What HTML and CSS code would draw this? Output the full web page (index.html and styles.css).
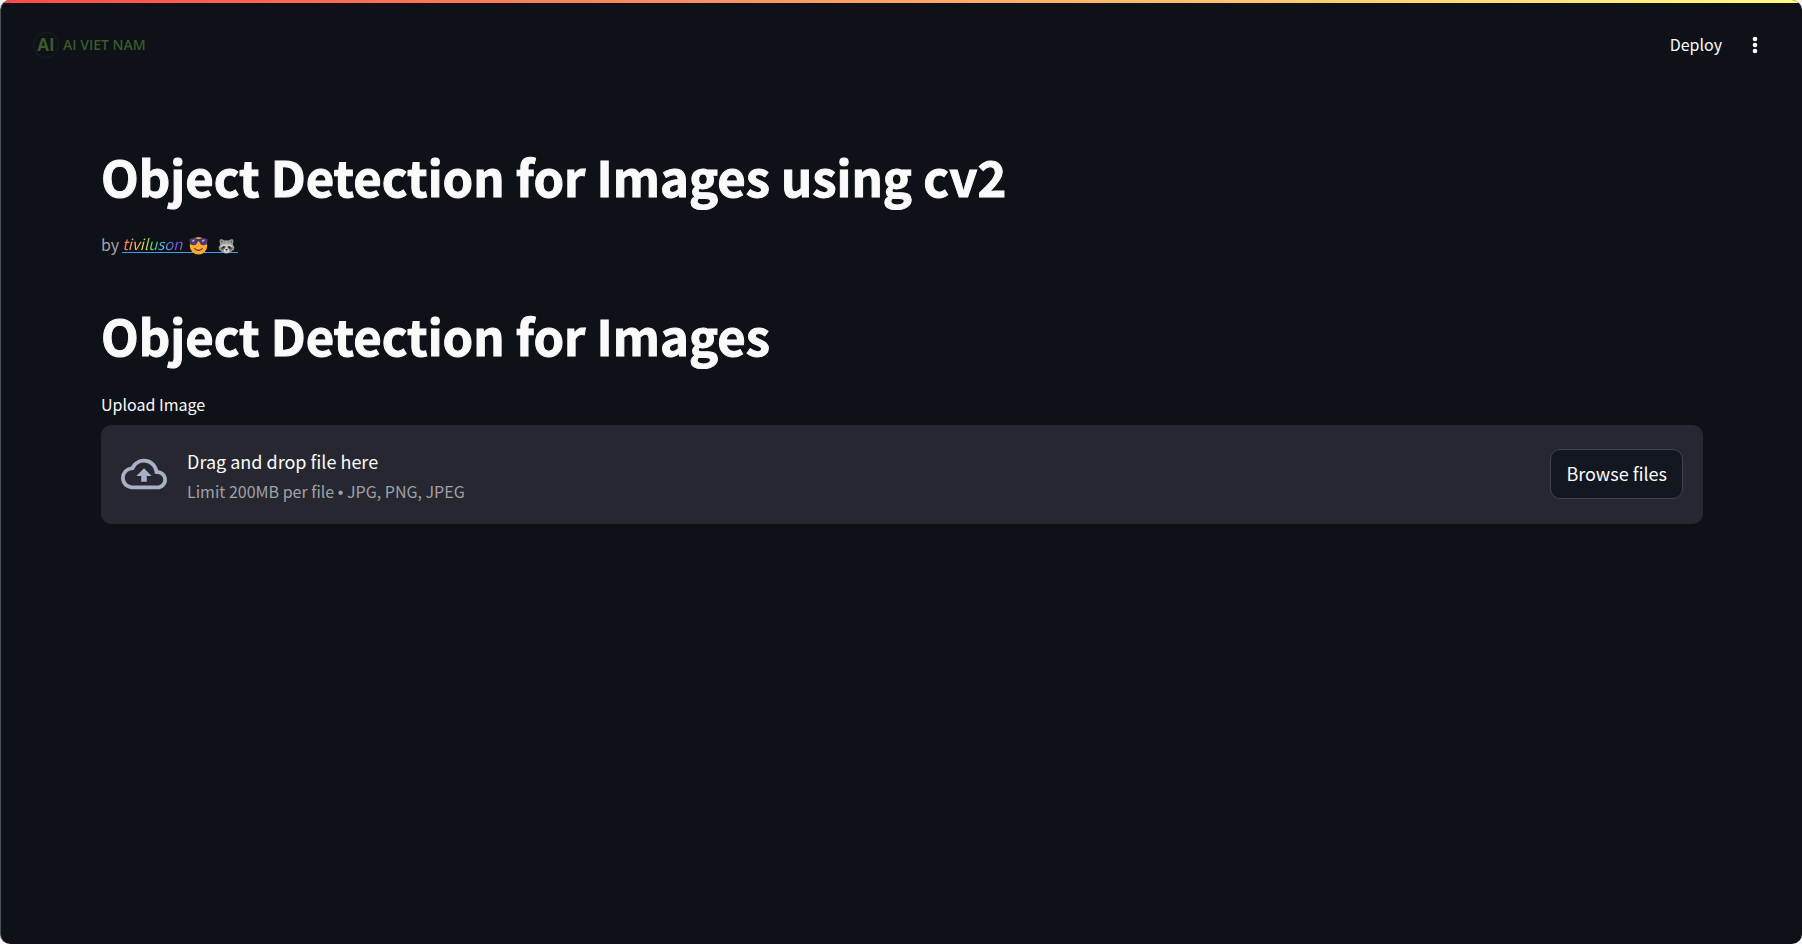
FILE: index.html
```html
<!DOCTYPE html>
<html lang="en">
<head>
<meta charset="utf-8">
<meta name="viewport" content="width=device-width, initial-scale=1">
<title>Object Detection for Images using cv2</title>
<link rel="stylesheet" href="styles.css">
</head>
<body>
<div class="app">
  <div class="decoration"></div>
  <header class="header">
    <div class="logo"><span class="logo-mark">AI</span><span class="logo-name">AI VIET NAM</span></div>
    <div class="toolbar">
      <button type="button" class="deploy">Deploy</button>
      <button type="button" class="menu" aria-label="Main menu">
        <svg width="6" height="18" viewBox="0 0 6 18" fill="currentColor"><circle cx="3" cy="3" r="2.3"/><circle cx="3" cy="9" r="2.3"/><circle cx="3" cy="15" r="2.3"/></svg>
      </button>
    </div>
  </header>
  <main class="main">
    <h1 class="title">Object Detection for Images using cv2</h1>
    <p class="byline">by <a class="author" href="#"><em class="rainbow">tiviluson</em><svg class="face" role="img" aria-label="smiling face with sunglasses" width="19" height="19" viewBox="0 0 20 20">
        <circle cx="10" cy="10.3" r="9.2" fill="#ffa92e"/>
        <path d="M.4 3.3Q5 1.2 9 3.2h2q4-2 8.600.1l-.3 3.400q-.7 3-4.100 3-3.600 0-4.400-3.800h-1.600Q8.400 9.700 4.800 9.700 1.400 9.700.7 6.700z" fill="#433b6b"/>
        <path d="M1.800 4.300q3-1.300 6 .2-.3 3.800-3 3.900-2.500 0-3-4.100zM12.200 4.500q3-1.500 6-.2-.5 4.100-3 4.100-2.700-.1-3-3.900z" fill="#583779"/>
        <path d="M4.500 3.900 6.400 3.900 4.200 6.300 3 5.300zM14.900 3.900 16.800 3.900 14.600 6.300 13.400 5.300z" fill="#d4b5df"/>
        <path d="M6 13.300q4 3.600 8 0" fill="none" stroke="#4b3444" stroke-width="1.300" stroke-linecap="round"/>
      </svg><svg class="raccoon" role="img" aria-label="raccoon" width="17" height="17" viewBox="0 0 18 18">
        <path d="M2.300 6.500Q.9 2.800 2.100 1.500 4.300.700 6.600 2.700q2.400-.7 4.800 0 2.300-2 4.500-1.200 1.200 1.300-.2 5l1.900 4.300-1.200.5.500 1.600-1.700.3Q13.200 16.300 9 16.500 4.800 16.300 2.800 13.200l-1.700-.3.500-1.600-1.200-.5z" fill="#9b9b9b"/>
        <path d="M3 5 3 2.600 5.200 3.600zM15 5 15 2.600 12.800 3.600z" fill="#555"/>
        <path d="M2.300 8.700 5.600 6.400l2.700.8.700-3 .7 3 2.700-.8 3.300 2.300-1.400 1L12 8.200l-3 1-3-1-2.300 1.500z" fill="#cfcfcf"/>
        <path d="M2.600 11.200q1.500-3.200 4.800-2.800l.3 2.500-3.200 2zM15.400 11.200q-1.500-3.200-4.800-2.800l-.3 2.500 3.200 2z" fill="#555"/>
        <path d="M9 9.500 6.300 12.300q-.5 3.700 2.700 3.800 3.200-.1 2.700-3.800z" fill="#e7e7e7"/>
        <path d="M7.600 11.900q1.400-.7 2.800 0-.2 1.300-1.400 1.400-1.200-.1-1.400-1.400zM7.700 14.900q1.300-.9 2.600 0" fill="#333" stroke="#555" stroke-width=".4"/>
        <circle cx="5.900" cy="9.900" r=".8" fill="#111"/><circle cx="12.100" cy="9.900" r=".8" fill="#111"/>
      </svg></a></p>
    <h1 class="title">Object Detection for Images</h1>
    <div class="field">
      <label class="label" for="browse">Upload Image</label>
      <section class="dropzone">
        <svg class="cloud" width="46" height="46" viewBox="0 0 24 24" fill="currentColor" aria-hidden="true"><path d="M19.350 10.040A7.490 7.490 0 0 0 12 4C9.110 4 6.600 5.640 5.350 8.040A5.994 5.994 0 0 0 0 14c0 3.310 2.690 6 6 6h13c2.760 0 5-2.240 5-5 0-2.640-2.050-4.780-4.650-4.960zM19 18H6c-2.210 0-4-1.790-4-4 0-2.050 1.530-3.760 3.560-3.970l1.070-.11.5-.95A5.469 5.469 0 0 1 12 6c2.620 0 4.880 1.860 5.390 4.430l.3 1.500 1.530.11A2.980 2.980 0 0 1 22 15c0 1.650-1.350 3-3 3zM8 13h2.550v3h2.900v-3H16l-4-4z"/></svg>
        <div class="instructions">
          <span class="prompt">Drag and drop file here</span>
          <small class="limit">Limit 200MB per file <span class="dot">•</span> JPG, PNG, JPEG</small>
        </div>
        <button type="button" class="browse" id="browse">Browse files</button>
      </section>
    </div>
  </main>
</div>
</body>
</html>
```
FILE: styles.css
```css
* { box-sizing: border-box; }

body {
  margin: 0;
  background: #f4f5f7;
  color: #fafafa;
  font-family: "Noto Sans CJK SC", "Noto Sans", sans-serif;
  font-size: 16px;
  line-height: 28px;
}

button {
  border: 0;
  background: none;
  color: inherit;
  font: inherit;
  cursor: pointer;
}

.app {
  min-height: 100vh;
  border-left: 1px solid #4a5158;
  border-radius: 10px;
  background: #0e1117;
  overflow: hidden;
}

.decoration {
  height: 3px;
  background: linear-gradient(90deg, #ff4b4b, #fffd80);
}

.header {
  display: flex;
  align-items: center;
  justify-content: space-between;
  height: 84px;
  padding: 0 40px 0 32px;
}

.logo {
  display: flex;
  align-items: center;
  gap: 4px;
  color: #3a5a29;
  font-family: "Open Sans", "Noto Sans", sans-serif;
  font-weight: 700;
  line-height: 24px;
}

.logo-mark {
  display: grid;
  place-items: center;
  width: 26px;
  height: 26px;
  border: 1px solid #172219;
  border-radius: 50%;
  font-size: 17px;
}

.logo-name {
  font-size: 14px;
  font-weight: 600;
}

.toolbar {
  display: flex;
  align-items: center;
  gap: 26px;
}

.deploy { padding: 0 0 2px; }

.menu {
  display: flex;
  padding: 4px;
}

.main { padding: 56px 99px 80px 100px; }

.title {
  margin: 0;
  font-size: 49px;
  font-weight: 700;
  line-height: 66px;
  -webkit-text-stroke: 1px currentColor;
}

.byline {
  display: flex;
  gap: 3px;
  margin: 21px 0 44px;
  color: #a3a4a6;
}

.author {
  display: flex;
  align-items: flex-start;
  background: linear-gradient(#3d9df3, #3d9df3) 0 22px / 100% 1px no-repeat;
  text-decoration: none;
}

.rainbow {
  background: linear-gradient(90deg, #ff6c6c, #ffbd45 22%, #c8dc50 38%, #3dd56d 52%, #60b4ff 68%, #6b55d8 85%, #8c55db);
  background-clip: text;
  color: transparent;
  font-size: 15px;
}

.face { margin: 6px 0 0 6px; }
.raccoon { margin: 8px 3px 0 10px; }

.field {
  display: flex;
  flex-direction: column;
  gap: 7px;
  margin-top: 22px;
}

.dropzone {
  display: flex;
  align-items: center;
  padding: 19px 20px 20px;
  border-radius: 10px;
  background: #262730;
}

.cloud {
  flex: none;
  margin-right: 20px;
  color: #a9afc5;
}

.instructions {
  display: flex;
  flex: 1;
  flex-direction: column;
}

.prompt {
  font-size: 18px;
  line-height: 34px;
}

.limit {
  color: #a0a1a5;
  font-size: 16px;
  line-height: 26px;
}

.dot {
  font-family: "Liberation Sans", sans-serif;
  line-height: 1;
}

.browse {
  height: 50px;
  padding: 0 15px 2px;
  border: 1px solid #41444c;
  border-radius: 10px;
  background: #131720;
  font-size: 18px;
}
```
